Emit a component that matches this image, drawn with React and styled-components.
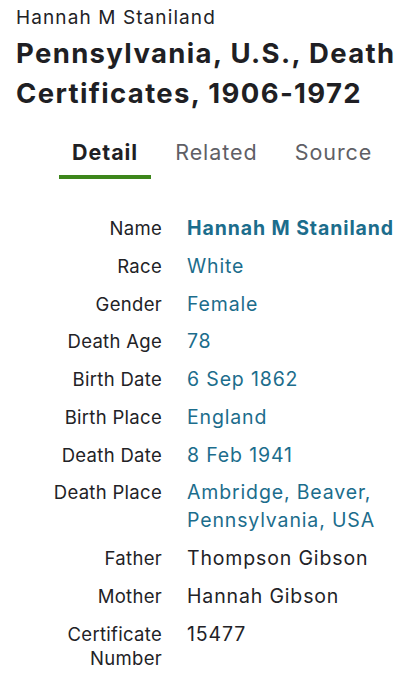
import React from "react";
import styled, { createGlobalStyle } from "styled-components";

const Global = createGlobalStyle`
  html, body { margin: 0; padding: 0; background: #fff; }
  body { font-family: Inter, "Noto Sans", "Liberation Sans", sans-serif; color: #1f1f24; }
`;

const Page = styled.div`
  padding: 5px 16px 0 16px;
`;

const Person = styled.div`
  font-size: 19px;
  line-height: 26px;
  letter-spacing: 1.1px;
  white-space: nowrap;
  color: #222226;
`;

const Title = styled.h1`
  margin: 2px 0 0 0;
  font-size: 27.5px;
  line-height: 40px;
  font-weight: 700;
  letter-spacing: 1.35px;
  white-space: nowrap;
  color: #1f1f24;
`;

const Tabs = styled.div`
  display: flex;
  gap: 11px;
  margin: 15px 0 0 43px;
`;

const Tab = styled.div`
  padding: 10px 13px 9px;
  font-size: 21.5px;
  line-height: 28px;
  letter-spacing: 0.95px;
  font-weight: ${(p) => (p.$active ? 700 : 400)};
  color: ${(p) => (p.$active ? "#1f1f24" : "#5f5f66")};
  border-bottom: 4px solid ${(p) => (p.$active ? "#3d861b" : "transparent")};
`;

const Facts = styled.dl`
  display: grid;
  grid-template-columns: 146px 1fr;
  column-gap: 25px;
  row-gap: 9.75px;
  margin: 35px 0 0 0;
`;

const Label = styled.dt`
  margin: 0;
  text-align: right;
  font-size: 18.5px;
  line-height: 24px;
  letter-spacing: 0.3px;
  padding-top: 2px;
  color: #222226;
`;

const Value = styled.dd`
  margin: 0;
  font-size: 19.5px;
  line-height: 28px;
  white-space: nowrap;
  letter-spacing: ${(p) => (p.$bold ? "0.9px" : "0.85px")};
  font-weight: ${(p) => (p.$bold ? 700 : 400)};
  color: ${(p) => (p.$link ? "#1c6d8c" : "#222226")};
`;

const rows = [
  ["Name", "Hannah M Staniland", true, true],
  ["Race", "White", true],
  ["Gender", "Female", true],
  ["Death Age", "78", true],
  ["Birth Date", "6 Sep 1862", true],
  ["Birth Place", "England", true],
  ["Death Date", "8 Feb 1941", true],
  ["Death Place", ["Ambridge, Beaver,", "Pennsylvania, USA"], true],
  ["Father", "Thompson Gibson", false],
  ["Mother", "Hannah Gibson", false],
  [["Certificate", "Number"], "15477", false],
];

const lines = (v) =>
  Array.isArray(v)
    ? v.map((t, i) => (
        <React.Fragment key={i}>
          {i > 0 && <br />}
          {t}
        </React.Fragment>
      ))
    : v;

export default function App() {
  return (
    <Page>
      <Global />
      <Person>Hannah M Staniland</Person>
      <Title>
        Pennsylvania, U.S., Death
        <br />
        Certificates, 1906-1972
      </Title>
      <Tabs>
        <Tab $active>Detail</Tab>
        <Tab>Related</Tab>
        <Tab>Source</Tab>
      </Tabs>
      <Facts>
        {rows.map(([label, value, link, bold], i) => (
          <React.Fragment key={i}>
            <Label>{lines(label)}</Label>
            <Value $link={link} $bold={bold}>
              {lines(value)}
            </Value>
          </React.Fragment>
        ))}
      </Facts>
    </Page>
  );
}
